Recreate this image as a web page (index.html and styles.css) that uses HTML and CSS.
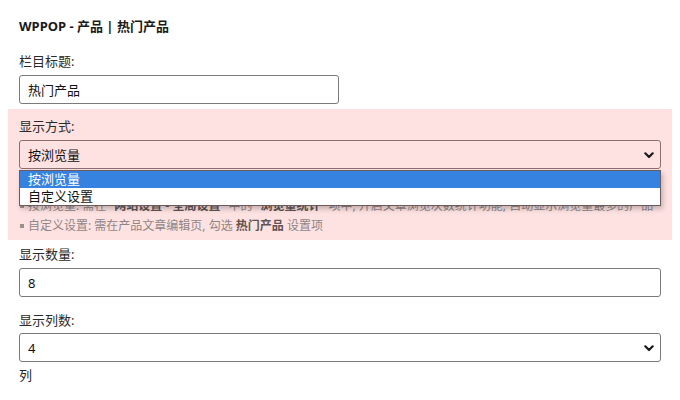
FILE: index.html
```html
<!DOCTYPE html>
<html lang="zh-CN">
<head>
<meta charset="utf-8">
<title>WPPOP - 产品 | 热门产品</title>
<link rel="stylesheet" href="styles.css">
</head>
<body>
<div class="page">
  <h3 class="title">WPPOP - 产品 | 热门产品</h3>

  <div class="field field-first">
    <label class="label">栏目标题:</label>
    <div class="control control-short">热门产品</div>
  </div>

  <div class="highlight">
    <label class="label">显示方式:</label>
    <div class="select-wrap">
      <div class="control select">
        <span>按浏览量</span>
        <svg class="chev" width="10" height="7" viewBox="0 0 10 7"><path d="M1.3 1.3 L5 5 L8.7 1.3" fill="none" stroke="#1a1a1a" stroke-width="2.2" stroke-linecap="round" stroke-linejoin="round"/></svg>
      </div>
      <ul class="dropdown">
        <li class="opt opt-active">按浏览量</li>
        <li class="opt">自定义设置</li>
      </ul>
    </div>
    <div class="desc">
      <p><span class="dot"></span>按浏览量: 需在 "<b>网站设置 - 全局设置</b>" 中的 "<b>浏览量统计</b>" 项中, 开启文章浏览次数统计功能, 自动显示浏览量最多的产品</p>
      <p><span class="dot"></span>自定义设置: 需在产品文章编辑页, 勾选 <b>热门产品</b> 设置项</p>
    </div>
  </div>

  <div class="field field-after">
    <label class="label">显示数量:</label>
    <div class="control">8</div>
  </div>

  <div class="field field-next">
    <label class="label">显示列数:</label>
    <div class="control select">
      <span>4</span>
      <svg class="chev" width="10" height="7" viewBox="0 0 10 7"><path d="M1.3 1.3 L5 5 L8.7 1.3" fill="none" stroke="#1a1a1a" stroke-width="2.2" stroke-linecap="round" stroke-linejoin="round"/></svg>
    </div>
    <div class="unit">列</div>
  </div>
</div>
</body>
</html>
```

FILE: styles.css
```css
* { box-sizing: border-box; }
html, body { margin: 0; padding: 0; background: #fff; }
body {
  font-family: "Noto Sans", "Noto Sans CJK SC", sans-serif;
  font-size: 13px;
  color: #1d1d1d;
}
.page {
  padding: 16px 8px 0 8px;
}
.title {
  margin: 0;
  padding: 0 11px;
  font-size: 13px;
  font-weight: 700;
  line-height: 20px;
  color: #1a1a1a;
}
.field {
  padding: 0 11px;
  display: flex;
  flex-direction: column;
}
.field-first { margin-top: 15px; }
.field-after { margin-top: 4px; }
.field-next { margin-top: 13px; }
.label {
  display: block;
  line-height: 20px;
  margin-bottom: 4px;
  color: #2a2a2a;
}
.field-next .label { margin-bottom: 3px; }
.control {
  height: 29px;
  border: 1px solid #7a7a7a;
  border-radius: 3px;
  padding: 0 8px;
  display: flex;
  align-items: center;
  background: #fff;
  color: #111;
}
.control-short { width: 320px; }
.select {
  justify-content: space-between;
  padding-right: 6px;
}
.chev { display: block; margin-top: 1px; }
.highlight {
  margin-top: 5px;
  background: #fee2e2;
  padding: 7px 11px 4px 11px;
}
.highlight .select {
  background: transparent;
  border-color: #8a6f6f;
}
.select-wrap {
  position: relative;
}
.dropdown {
  position: absolute;
  top: 30px;
  left: 0;
  right: 0;
  margin: 0;
  padding: 0;
  list-style: none;
  background: #fff;
  border: 1px solid #6e5a5a;
  box-shadow: 2px 3px 5px rgba(0,0,0,0.22);
  z-index: 5;
}
.opt {
  height: 17px;
  line-height: 17px;
  padding-left: 8px;
  color: #111;
}
.opt-active {
  background: #3582e0;
  color: #fff;
}
.desc {
  margin-top: 27px;
  color: #8f8585;
  font-size: 12px;
}
.desc p {
  margin: 0;
  line-height: 20px;
  white-space: nowrap;
}
.dot {
  display: inline-block;
  width: 4px;
  height: 4px;
  background: #9a8f8f;
  margin: 0 4px 2px 1px;
  vertical-align: middle;
}
.desc b { color: #5d5555; font-weight: 700; }
.unit {
  line-height: 20px;
  margin-top: 3px;
  color: #222;
}
```
